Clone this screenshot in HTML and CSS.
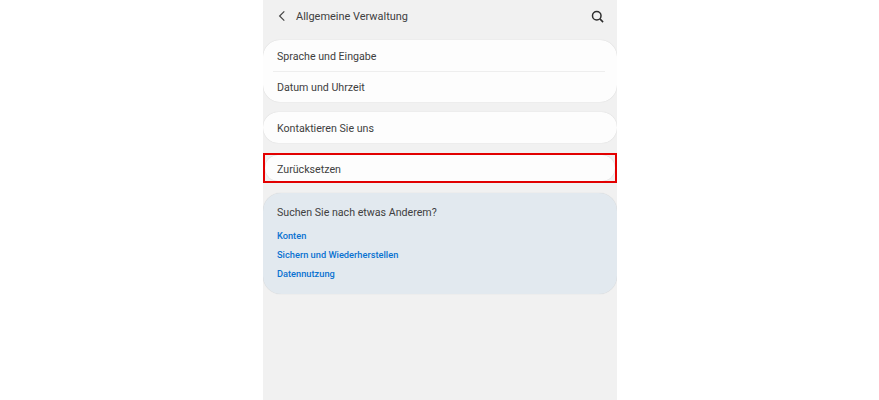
FILE: index.html
```html
<!DOCTYPE html>
<html lang="de">
<head>
  <meta charset="UTF-8">
  <meta name="viewport" content="width=device-width, initial-scale=1.0">
  <title>Allgemeine Verwaltung</title>
  <link rel="stylesheet" href="styles.css">
</head>
<body>
  <div class="phone">
    <div class="header">
      <svg class="back" width="10" height="14" viewBox="0 0 10 14">
        <path d="M7.3 2.3 L2.6 7 L7.3 11.7" fill="none" stroke="#444" stroke-width="1.2"/>
      </svg>
      <span class="title">Allgemeine Verwaltung</span>
      <svg class="search" width="13" height="13" viewBox="0 0 14 14">
        <circle cx="6.2" cy="6.2" r="4.6" fill="none" stroke="#2e2e2e" stroke-width="1.6"/>
        <path d="M9.6 9.6 L13 13" stroke="#2e2e2e" stroke-width="1.7"/>
      </svg>
    </div>

    <div class="card">
      <div class="row">Sprache und Eingabe</div>
      <div class="divider"></div>
      <div class="row">Datum und Uhrzeit</div>
    </div>

    <div class="card">
      <div class="row">Kontaktieren Sie uns</div>
    </div>

    <div class="highlight">
      <div class="card inner">
        <div class="row">Zurücksetzen</div>
      </div>
    </div>

    <div class="card more">
      <div class="more-title">Suchen Sie nach etwas Anderem?</div>
      <a class="link">Konten</a>
      <a class="link">Sichern und Wiederherstellen</a>
      <a class="link">Datennutzung</a>
    </div>
  </div>
</body>
</html>
```

FILE: styles.css
```css
html, body {
  margin: 0;
  padding: 0;
  background: #fff;
}
body {
  font-family: Roboto, "Liberation Sans", sans-serif;
  color: #404040;
  font-size: 10.65px;
}
.phone {
  width: 354px;
  height: 400px;
  margin-left: 263px;
  background: #f1f1f1;
  overflow: hidden;
}
.header {
  display: flex;
  align-items: center;
  height: 32px;
  padding: 0 13.5px 0 14px;
  margin-bottom: 8px;
}
.back {
  margin-right: 9px;
}
.title {
  flex: 1;
  font-size: 10.95px;
}
.card {
  background: #fdfdfd;
  border-radius: 17px;
  box-shadow: 0 0 1px rgba(0, 0, 0, 0.18);
  margin-bottom: 10px;
}
.row {
  height: 31px;
  line-height: 34px;
  padding: 0 14px;
}
.divider {
  height: 1px;
  margin: 0 12px -1px 10px;
  background: #eeeeee;
}
.highlight {
  border: 2px solid #e30000;
  height: 26px;
  margin-bottom: 10px;
}
.highlight .inner {
  margin: 0;
  height: 26px;
  border-radius: 13px;
}
.highlight .row {
  height: 26px;
  line-height: 30px;
  padding: 0 12px;
}
.more {
  background: #e2e9ef;
  height: 101px;
  padding: 0 14px;
  box-sizing: border-box;
  border-radius: 18px;
}
.more-title {
  padding-top: 13px;
  line-height: 14px;
  margin-bottom: 10px;
}
.link {
  display: block;
  color: #0a72d1;
  font-size: 9.25px;
  font-weight: 500;
  line-height: 12px;
  margin-bottom: 7px;
}
```
